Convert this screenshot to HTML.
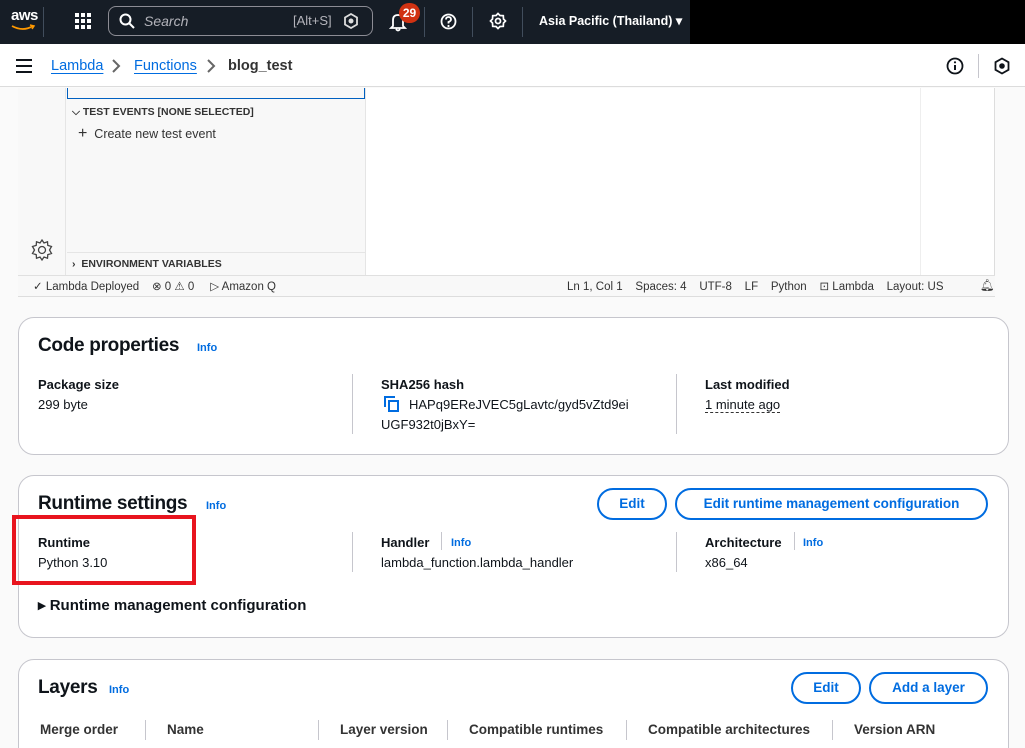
<!DOCTYPE html>
<html style="width:1025px;height:748px;overflow:hidden"><head><meta charset="utf-8"><style>
*{box-sizing:border-box;margin:0;padding:0}
body{width:1025px;height:748px;overflow:hidden;background:#fafafa;font-family:"Liberation Sans",sans-serif;color:#0f141a;position:relative}
.a{position:absolute}
.top{left:0;top:0;width:1025px;height:44px;background:#000}
.topin{left:0;top:0;width:690px;height:44px;background:#161d26}
.w{color:#fff}
.sep{width:1px;height:30px;top:7px;background:#414d5c}
.bc{left:0;top:44px;width:1025px;height:43px;background:#fff;border-bottom:1px solid #dcdcdc}
.lnk{color:#006ce0;text-decoration:underline;text-underline-offset:3px}
.card{background:#fff;border:1px solid #c6c6cd;border-radius:16px}
.h2{font-size:19px;font-weight:bold;letter-spacing:-.3px}
.info{color:#006ce0;font-size:11px;font-weight:bold}
.lbl{font-size:13px;font-weight:bold}
.val{font-size:13px}
.vs{width:1px;background:#c6c6cd}
.btn{border:2px solid #006ce0;border-radius:20px;color:#006ce0;font-weight:bold;font-size:13.5px;text-align:center;line-height:28px;height:32px}
.ide{font-size:11px;color:#333}
</style></head><body>
<div class="a top"></div><div class="a topin"></div>
<div class="a w" style="left:11px;top:7px;font-size:15px;font-weight:bold;letter-spacing:-.5px">aws</div>
<svg class="a" style="left:10px;top:24px" width="26" height="8"><path d="M2 2 Q13 8 23 2" stroke="#f90" stroke-width="1.8" fill="none"/><path d="M20 1 L24 2 L22 5" stroke="#f90" stroke-width="1.5" fill="none"/></svg>
<div class="a sep" style="left:43px"></div>
<svg class="a" style="left:75px;top:13px" width="16" height="16" fill="#fff"><rect x="0" y="0" width="4" height="4"/><rect x="6" y="0" width="4" height="4"/><rect x="12" y="0" width="4" height="4"/><rect x="0" y="6" width="4" height="4"/><rect x="6" y="6" width="4" height="4"/><rect x="12" y="6" width="4" height="4"/><rect x="0" y="12" width="4" height="4"/><rect x="6" y="12" width="4" height="4"/><rect x="12" y="12" width="4" height="4"/></svg>
<div class="a" style="left:108px;top:6px;width:265px;height:30px;border:1px solid #8c8c94;border-radius:8px"></div>
<svg class="a" style="left:119px;top:13px" width="16" height="16"><circle cx="6.5" cy="6.5" r="5" stroke="#fff" stroke-width="2" fill="none"/><path d="M10 10 L15 15" stroke="#fff" stroke-width="2"/></svg>
<div class="a" style="left:144px;top:13px;font-size:14px;font-style:italic;color:#b4b4bb">Search</div>
<div class="a" style="left:293px;top:13px;font-size:13px;color:#b4b4bb">[Alt+S]</div>
<svg class="a" style="left:343px;top:13px" width="16" height="16"><path d="M8 1 L14 4.5 L14 11.5 L8 15 L2 11.5 L2 4.5Z" stroke="#ddd" stroke-width="1.8" fill="none"/><circle cx="8" cy="8" r="2.5" fill="#ddd"/></svg>
<svg class="a" style="left:389px;top:12px" width="18" height="20"><path d="M4 14 L4 8 Q4 3 9 3 Q14 3 14 8 L14 14 L16 16 L2 16Z M7 17 Q9 20 11 17" stroke="#fff" stroke-width="1.8" fill="none"/></svg>
<div class="a w" style="left:399px;top:3px;width:21px;height:20px;border-radius:10px;background:#d13212;font-size:12px;font-weight:bold;text-align:center;line-height:20px">29</div>
<div class="a sep" style="left:424px"></div>
<svg class="a" style="left:440px;top:13px" width="17" height="17"><circle cx="8.5" cy="8.5" r="7" stroke="#fff" stroke-width="1.8" fill="none"/><path d="M6 6.5 Q6 4 8.5 4 Q11 4 11 6.5 Q11 8 8.5 9 L8.5 10.5" stroke="#fff" stroke-width="1.8" fill="none"/><circle cx="8.5" cy="13" r="1.1" fill="#fff"/></svg>
<div class="a sep" style="left:472px"></div>
<svg class="a" style="left:489px;top:12px" width="18" height="18"><circle cx="9" cy="9" r="2.5" stroke="#fff" stroke-width="1.8" fill="none"/><path d="M9 1.5 L11 3.5 L14.3 3.7 L14.5 7 L16.5 9 L14.5 11 L14.3 14.3 L11 14.5 L9 16.5 L7 14.5 L3.7 14.3 L3.5 11 L1.5 9 L3.5 7 L3.7 3.7 L7 3.5Z" stroke="#fff" stroke-width="1.7" fill="none"/></svg>
<div class="a sep" style="left:522px"></div>
<div class="a w" style="left:539px;top:13px;font-size:12.5px;font-weight:bold">Asia Pacific (Thailand) ▾</div>

<div class="a bc"></div>
<svg class="a" style="left:16px;top:59px" width="16" height="14"><path d="M0 1h16M0 7h16M0 13h16" stroke="#0f141a" stroke-width="2"/></svg>
<div class="a lnk" style="left:51px;top:58px;font-size:14.5px">Lambda</div>
<svg class="a" style="left:111px;top:59px" width="10" height="14"><path d="M2 1 L8 7 L2 13" stroke="#666" stroke-width="2" fill="none"/></svg>
<div class="a lnk" style="left:134px;top:58px;font-size:14.5px">Functions</div>
<svg class="a" style="left:206px;top:59px" width="10" height="14"><path d="M2 1 L8 7 L2 13" stroke="#666" stroke-width="2" fill="none"/></svg>
<div class="a" style="left:228px;top:58px;font-size:14.5px;font-weight:bold;color:#333">blog_test</div>
<svg class="a" style="left:946px;top:57px" width="18" height="18"><circle cx="9" cy="9" r="7.5" stroke="#0f141a" stroke-width="1.8" fill="none"/><path d="M9 8v5" stroke="#0f141a" stroke-width="2"/><circle cx="9" cy="5.3" r="1.1" fill="#0f141a"/></svg>
<div class="a" style="left:978px;top:54px;width:1px;height:24px;background:#c6c6cd"></div>
<svg class="a" style="left:993px;top:57px" width="18" height="18"><path d="M9 1.5 L15.5 5.2 L15.5 12.8 L9 16.5 L2.5 12.8 L2.5 5.2Z" stroke="#0f141a" stroke-width="1.8" fill="none"/><circle cx="9" cy="9" r="2.8" fill="#0f141a"/></svg>

<!-- IDE -->
<div class="a" style="left:18px;top:88px;width:977px;height:209px;background:#fff;border-left:1px solid #ddd;border-right:1px solid #ddd"></div>
<div class="a" style="left:18px;top:88px;width:48px;height:187px;background:#f8f8f8;border-right:1px solid #e5e5e5"></div>
<div class="a" style="left:66px;top:88px;width:300px;height:187px;background:#f8f8f8;border-right:1px solid #e5e5e5"></div>
<div class="a" style="left:67px;top:88px;width:298px;height:11px;border:1px solid #0060c0;border-top:none"></div>
<div class="a ide" style="left:72px;top:106px;font-size:10.5px;font-weight:bold">⌵ TEST EVENTS [NONE SELECTED]</div>
<div class="a ide" style="left:78px;top:125px;font-size:12.5px"><span style="font-size:16px;font-weight:300">+</span>&nbsp; Create new test event</div>
<div class="a" style="left:67px;top:252px;width:298px;height:1px;background:#e5e5e5"></div>
<div class="a ide" style="left:72px;top:258px;font-size:10.5px;font-weight:bold">›&nbsp; ENVIRONMENT VARIABLES</div>
<svg class="a" style="left:30px;top:238px" width="24" height="24"><circle cx="12" cy="12" r="3.5" stroke="#444" stroke-width="1.3" fill="none"/><path d="M12 2 L14 5 L17.5 3.8 L17.8 7.4 L21.5 8.5 L19.5 12 L21.5 15.5 L17.8 16.6 L17.5 20.2 L14 19 L12 22 L10 19 L6.5 20.2 L6.2 16.6 L2.5 15.5 L4.5 12 L2.5 8.5 L6.2 7.4 L6.5 3.8 L10 5Z" stroke="#444" stroke-width="1.3" fill="none"/></svg>
<div class="a" style="left:920px;top:88px;width:1px;height:187px;background:#eee"></div>
<div class="a" style="left:18px;top:275px;width:977px;height:22px;background:#f8f8f8;border-top:1px solid #e0e0e0;border-bottom:1px solid #ddd"></div>
<div class="a ide" style="left:33px;top:279px;font-size:11.5px">✓ Lambda Deployed&nbsp;&nbsp;&nbsp; ⊗ 0 ⚠ 0&nbsp;&nbsp;&nbsp;&nbsp; ▷ Amazon Q</div>
<div class="a ide" style="left:567px;top:279px;font-size:11.5px">Ln 1, Col 1&nbsp;&nbsp;&nbsp; Spaces: 4&nbsp;&nbsp;&nbsp; UTF-8&nbsp;&nbsp;&nbsp; LF&nbsp;&nbsp;&nbsp; Python&nbsp;&nbsp;&nbsp; ⊡ Lambda&nbsp;&nbsp;&nbsp; Layout: US</div>
<div class="a ide" style="left:980px;top:278px;font-size:11.5px">🔔︎</div>

<!-- Code properties -->
<div class="a card" style="left:18px;top:317px;width:991px;height:138px"></div>
<div class="a h2" style="left:38px;top:335px">Code properties</div>
<div class="a info" style="left:197px;top:342px">Info</div>
<div class="a lbl" style="left:38px;top:377px">Package size</div>
<div class="a val" style="left:38px;top:397px">299 byte</div>
<div class="a vs" style="left:352px;top:374px;height:60px"></div>
<div class="a lbl" style="left:381px;top:377px">SHA256 hash</div>
<svg class="a" style="left:384px;top:396px" width="16" height="17"><path d="M1 11 L1 1 L11 1" stroke="#006ce0" stroke-width="2" fill="none"/><rect x="5" y="5" width="9" height="10" stroke="#006ce0" stroke-width="2" fill="none"/></svg>
<div class="a val" style="left:409px;top:397px">HAPq9EReJVEC5gLavtc/gyd5vZtd9ei</div>
<div class="a val" style="left:381px;top:417px">UGF932t0jBxY=</div>
<div class="a vs" style="left:676px;top:374px;height:60px"></div>
<div class="a lbl" style="left:705px;top:377px">Last modified</div>
<div class="a val" style="left:705px;top:397px;border-bottom:1px dashed #333">1 minute ago</div>

<!-- Runtime settings -->
<div class="a card" style="left:18px;top:475px;width:991px;height:163px"></div>
<div class="a h2" style="left:38px;top:493px">Runtime settings</div>
<div class="a info" style="left:206px;top:500px">Info</div>
<div class="a btn" style="left:597px;top:488px;width:70px">Edit</div>
<div class="a btn" style="left:675px;top:488px;width:313px">Edit runtime management configuration</div>
<div class="a lbl" style="left:38px;top:535px">Runtime</div>
<div class="a val" style="left:38px;top:555px">Python 3.10</div>
<div class="a" style="left:12px;top:515px;width:184px;height:70px;border:4px solid #e8141e"></div>
<div class="a vs" style="left:352px;top:532px;height:40px"></div>
<div class="a lbl" style="left:381px;top:535px">Handler</div>
<div class="a vs" style="left:441px;top:532px;height:18px"></div>
<div class="a info" style="left:451px;top:537px">Info</div>
<div class="a val" style="left:381px;top:555px">lambda_function.lambda_handler</div>
<div class="a vs" style="left:676px;top:532px;height:40px"></div>
<div class="a lbl" style="left:705px;top:535px">Architecture</div>
<div class="a vs" style="left:794px;top:532px;height:18px"></div>
<div class="a info" style="left:803px;top:537px">Info</div>
<div class="a val" style="left:705px;top:555px">x86_64</div>
<div class="a" style="left:38px;top:596px;font-size:15px;font-weight:bold">▸ Runtime management configuration</div>

<!-- Layers -->
<div class="a card" style="left:18px;top:659px;width:991px;height:120px"></div>
<div class="a h2" style="left:38px;top:677px">Layers</div>
<div class="a info" style="left:109px;top:684px">Info</div>
<div class="a btn" style="left:791px;top:672px;width:70px">Edit</div>
<div class="a btn" style="left:869px;top:672px;width:119px">Add a layer</div>
<div class="a lbl" style="left:40px;top:722px;font-size:13.5px;color:#333">Merge order</div>
<div class="a vs" style="left:145px;top:720px;height:20px"></div>
<div class="a lbl" style="left:167px;top:722px;font-size:13.5px;color:#333">Name</div>
<div class="a vs" style="left:318px;top:720px;height:20px"></div>
<div class="a lbl" style="left:340px;top:722px;font-size:13.5px;color:#333">Layer version</div>
<div class="a vs" style="left:447px;top:720px;height:20px"></div>
<div class="a lbl" style="left:469px;top:722px;font-size:13.5px;color:#333">Compatible runtimes</div>
<div class="a vs" style="left:626px;top:720px;height:20px"></div>
<div class="a lbl" style="left:648px;top:722px;font-size:13.5px;color:#333">Compatible architectures</div>
<div class="a vs" style="left:832px;top:720px;height:20px"></div>
<div class="a lbl" style="left:854px;top:722px;font-size:13.5px;color:#333">Version ARN</div>
</body></html>
